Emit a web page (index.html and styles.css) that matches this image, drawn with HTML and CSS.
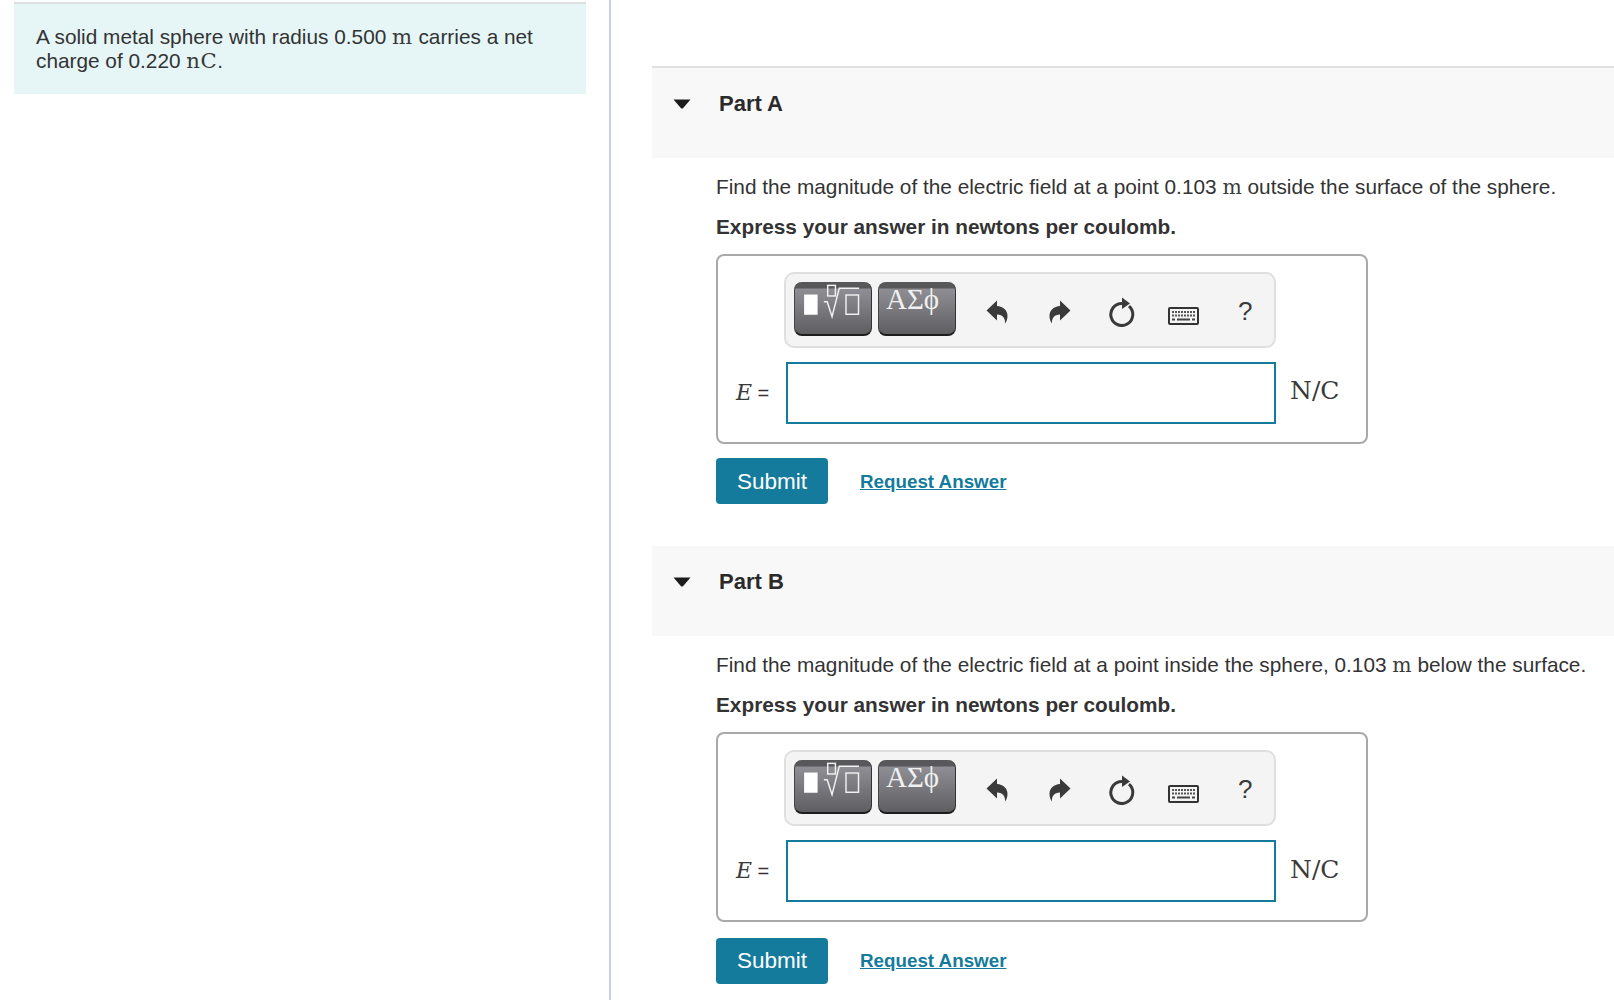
FILE: index.html
```html
<!DOCTYPE html>
<html lang="en">
<head>
<meta charset="utf-8">
<title>Electric field of a metal sphere</title>
<link rel="stylesheet" href="styles.css">
</head>
<body>
<div class="page">
  <aside class="intro">
    <div class="intro-box">
      <p class="intro-line">A solid metal sphere with radius 0.500 <span class="math">m</span> carries a net</p>
      <p class="intro-line">charge of 0.220 <span class="math">nC</span>.</p>
    </div>
  </aside>
  <main class="parts">
    <section class="part part-a">
      <header class="part-head">
        <svg class="caret" viewBox="0 0 18 10"><path d="M0.5 0.5H17.5L10 9.2Q9 10 8 9.2Z"/></svg>
        <h2 class="part-title">Part A</h2>
      </header>
      <div class="part-body">
        <p class="question">Find the magnitude of the electric field at a point 0.103 <span class="math">m</span> outside the surface of the sphere.</p>
        <p class="instruction">Express your answer in newtons per coulomb.</p>
        <div class="answer-box">
          <div class="toolbar">
            <div class="tool-btn">
              <svg class="tmpl-icon" viewBox="0 0 78 54"><rect class="white-fill" x="9" y="13" width="14" height="21"/><rect class="thin" x="33.5" y="3.5" width="8" height="11"/><path class="thin" d="M29.500 20.500H33L38 36L45.500 6.500H66"/><rect class="thin" x="52.500" y="13.500" width="13" height="20"/></svg>
            </div>
            <div class="tool-btn tool-btn-greek"><span class="greek">ΑΣϕ</span></div>
            <svg class="ico ico-undo" viewBox="0 0 22 24"><path d="M0.500 10.500L11 0.500V6C17 6.500 21.500 10 21.500 16C21.500 19 20.500 21.500 19 23.500C19.500 18.500 17 14.500 11 14.500V20.500Z"/></svg>
            <svg class="ico ico-redo" viewBox="0 0 22 24"><path d="M21.500 10.500L11 0.500V6C5 6.500 0.500 10 0.500 16C0.500 19 1.500 21.500 3 23.500C2.500 18.500 5 14.500 11 14.500V20.500Z"/></svg>
            <svg class="ico ico-reset" viewBox="0 0 26 30"><path class="ring" d="M20 9.200A11 11 0 1 1 13 6.500"/><path d="M13 0.500L21 6.500L13 12Z"/></svg>
            <svg class="ico ico-keys" viewBox="0 0 31 18"><rect class="key-frame" x="1" y="1" width="29" height="16" rx="1"/><path class="key-row" d="M4 5H27M4 8.500H27"/><path class="key-bar" d="M4 12.500H7M9 12.500H22M24 12.500H27"/></svg>
            <span class="help">?</span>
          </div>
          <div class="answer-row">
            <span class="var"><i class="math">E</i> =</span>
            <div class="answer-input"></div>
            <span class="unit math">N/C</span>
          </div>
        </div>
        <div class="actions">
          <span class="submit">Submit</span>
          <a class="request" href="#">Request Answer</a>
        </div>
      </div>
    </section>
    <section class="part part-b">
      <header class="part-head">
        <svg class="caret" viewBox="0 0 18 10"><path d="M0.5 0.5H17.5L10 9.2Q9 10 8 9.2Z"/></svg>
        <h2 class="part-title">Part B</h2>
      </header>
      <div class="part-body">
        <p class="question">Find the magnitude of the electric field at a point inside the sphere, 0.103 <span class="math">m</span> below the surface.</p>
        <p class="instruction">Express your answer in newtons per coulomb.</p>
        <div class="answer-box">
          <div class="toolbar">
            <div class="tool-btn">
              <svg class="tmpl-icon" viewBox="0 0 78 54"><rect class="white-fill" x="9" y="13" width="14" height="21"/><rect class="thin" x="33.5" y="3.5" width="8" height="11"/><path class="thin" d="M29.500 20.500H33L38 36L45.500 6.500H66"/><rect class="thin" x="52.500" y="13.500" width="13" height="20"/></svg>
            </div>
            <div class="tool-btn tool-btn-greek"><span class="greek">ΑΣϕ</span></div>
            <svg class="ico ico-undo" viewBox="0 0 22 24"><path d="M0.500 10.500L11 0.500V6C17 6.500 21.500 10 21.500 16C21.500 19 20.500 21.500 19 23.500C19.500 18.500 17 14.500 11 14.500V20.500Z"/></svg>
            <svg class="ico ico-redo" viewBox="0 0 22 24"><path d="M21.500 10.500L11 0.500V6C5 6.500 0.500 10 0.500 16C0.500 19 1.500 21.500 3 23.500C2.500 18.500 5 14.500 11 14.500V20.500Z"/></svg>
            <svg class="ico ico-reset" viewBox="0 0 26 30"><path class="ring" d="M20 9.200A11 11 0 1 1 13 6.500"/><path d="M13 0.500L21 6.500L13 12Z"/></svg>
            <svg class="ico ico-keys" viewBox="0 0 31 18"><rect class="key-frame" x="1" y="1" width="29" height="16" rx="1"/><path class="key-row" d="M4 5H27M4 8.500H27"/><path class="key-bar" d="M4 12.500H7M9 12.500H22M24 12.500H27"/></svg>
            <span class="help">?</span>
          </div>
          <div class="answer-row">
            <span class="var"><i class="math">E</i> =</span>
            <div class="answer-input"></div>
            <span class="unit math">N/C</span>
          </div>
        </div>
        <div class="actions">
          <span class="submit">Submit</span>
          <a class="request" href="#">Request Answer</a>
        </div>
      </div>
    </section>
  </main>
</div>
</body>
</html>
```
FILE: styles.css
```css
* { box-sizing: border-box; }
html, body { margin: 0; padding: 0; background: #fff; }
body { font-family: "Liberation Sans", Arial, sans-serif; color: #333; font-size: 20.800px; }
p, h2 { margin: 0; }
.page { display: flex; height: 1000px; overflow: hidden; }
.math { font-family: "DejaVu Serif", "Liberation Serif", serif; font-size: 0.980em; font-weight: 400; color: #3a3a3a; }

.intro { flex: 0 0 611px; padding: 2px 23px 0 14px; border-right: 2px solid #c6d3e0; }
.intro-box { height: 92px; padding: 21px 20px 0 22px; background: #e6f6f7; border-top: 2px solid #dddfe2; }
.intro-line { line-height: 24px; white-space: nowrap; }
.intro-line .math { font-size: 1.020em; letter-spacing: 0.500px; }

.parts { flex: 1; min-width: 0; padding: 66px 0 0 41px; }
.part { height: 478px; }
.part-a { border-top: 2px solid #e0e0e0; height: 480px; }
.part-head { display: flex; align-items: flex-start; gap: 28px; height: 90px; padding: 24px 0 0 21px; background: #f8f8f8; }
.caret { width: 18px; height: 10px; margin-top: 7px; fill: #1c1c1c; flex: none; }
.part-title { font-size: 22px; line-height: 24px; font-weight: 700; color: #2a2a2a; }

.part-body { padding: 17px 0 0 64px; }
.question { line-height: 24px; white-space: nowrap; }
.instruction { margin-top: 16px; line-height: 24px; font-weight: 700; }

.answer-box { width: 652px; height: 190px; margin-top: 15px; padding: 16px 0 0; border: 2px solid #a9a9a9; border-radius: 8px; }
.toolbar { display: flex; align-items: center; width: 492px; height: 76px; margin-left: 66px; padding-left: 8px; background: #f4f4f4; border: 2px solid #dfdfdf; border-radius: 10px; }
.tool-btn { flex: none; width: 78px; height: 54px; margin-top: -2px; margin-right: 6px; border-radius: 8px; border-bottom: 2px solid #1d1d1d; border-right: 1px solid #333; border-left: 1px solid #444; background: linear-gradient(#58585a 0, #58585a 6px, #8e8e94 7px, #5f5f62 100%); }
.tool-btn-greek { display: flex; justify-content: center; margin-right: 0; padding-right: 9px; }
.tmpl-icon { display: block; width: 76px; height: 52px; }
.white-fill { fill: #fff; }
.thin { fill: none; stroke: #f2f2f2; stroke-width: 1.500; }
.greek { font-family: "Liberation Serif", serif; font-size: 29px; line-height: 35px; color: #f0f0f0; }

.ico { flex: none; fill: #3a3a3a; }
.ico-undo { width: 22px; height: 24px; margin-left: 30px; margin-top: 3px; }
.ico-redo { width: 22px; height: 24px; margin-left: 41px; margin-top: 3px; }
.ico-reset { width: 26px; height: 30px; margin-left: 38px; margin-top: 3px; }
.ring { fill: none; stroke: #3a3a3a; stroke-width: 3; }
.ico-keys { width: 31px; height: 18px; margin-left: 33px; margin-top: 11px; }
.key-frame { fill: #f4f4f4; stroke: #333; stroke-width: 2; }
.key-row { fill: none; stroke: #555; stroke-width: 2; stroke-dasharray: 2 1; }
.key-bar { fill: none; stroke: #444; stroke-width: 2; }
.help { margin-left: 39px; font-size: 26px; color: #3a3a3a; line-height: 30px; margin-top: 2px; }

.answer-row { display: flex; align-items: center; margin-top: 14px; }
.var { width: 68px; padding-left: 18px; font-size: 20px; white-space: nowrap; margin-top: -2px; }
.var .math { font-size: 22px; font-style: italic; }
.answer-input { width: 490px; height: 62px; background: #fff; border: 2px solid #147b9c; }
.unit { margin-left: 14px; font-size: 25px; margin-top: -5px; }
.part-b .unit { margin-top: -3px; }

.actions { display: flex; align-items: center; gap: 32px; margin-top: 14px; }
.part-b .actions { margin-top: 16px; }
.submit { display: block; width: 112px; height: 46px; line-height: 47px; text-align: center; font-size: 22.500px; color: #fff; background: #147b9c; border-radius: 4px; }
.part-b .submit { line-height: 45px; }
.request { font-size: 18.800px; font-weight: 700; color: #147b9c; text-decoration: underline; padding-top: 2px; }
.part-b .request { padding-top: 0; }
```
